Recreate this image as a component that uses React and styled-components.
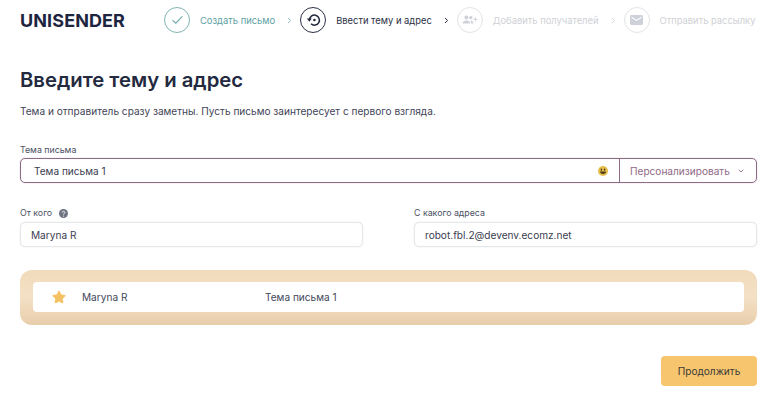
import React from 'react'
import styled, { createGlobalStyle } from 'styled-components'
import { FaStar } from 'react-icons/fa'

const GlobalStyle = createGlobalStyle`
  html, body {
    margin: 0;
    padding: 0;
    background: #fff;
    font-family: Inter, "Liberation Sans", sans-serif;
    color: #2a3044;
  }
`

const Page = styled.div`
  width: 768px;
  height: 401px;
  overflow: hidden;
  padding: 7px 11px 0 20px;
  box-sizing: border-box;
`

const Header = styled.header`
  display: flex;
  align-items: center;
  height: 26px;
`

const Logo = styled.div`
  width: 144px;
  flex: none;
  font-size: 18px;
  font-weight: 700;
  letter-spacing: 0.1px;
  color: #1e2540;
`

const Step = styled.div`
  display: flex;
  align-items: center;
  gap: 10px;
  flex: none;
`

const Circle = styled.div`
  width: 26px;
  height: 26px;
  box-sizing: border-box;
  border-radius: 50%;
  border: 1px solid ${({ $color }) => $color};
  display: flex;
  align-items: center;
  justify-content: center;
  background: #fff;
`

const StepText = styled.span`
  font-size: 9.4px;
  white-space: nowrap;
  color: ${({ $color }) => $color};
`

const Chevron = styled.svg`
  width: 5px;
  height: 7px;
  margin: 0 8px 0 12px;
  flex: none;
`

const Title = styled.h1`
  margin: 32px 0 0;
  font-size: 20.3px;
  line-height: 30px;
  font-weight: 600;
  color: #232a40;
`

const Lead = styled.p`
  margin: 8px 0 0;
  font-size: 10.1px;
  line-height: 16px;
  color: #3f4557;
`

const Label = styled.label`
  display: flex;
  align-items: center;
  gap: 7px;
  font-size: 8.8px;
  line-height: 12px;
  color: #4c5162;
  margin-bottom: ${({ $gap }) => $gap}px;
`

const SubjectBlock = styled.div`
  margin-top: 25px;
`

const SubjectBox = styled.div`
  display: flex;
  height: 25px;
  box-sizing: border-box;
  border: 1px solid #8f6a86;
  border-radius: 5px;
  box-shadow: 0 0 1px rgba(143, 106, 134, 0.7);
`

const SubjectValue = styled.div`
  flex: 1;
  display: flex;
  align-items: center;
  justify-content: space-between;
  padding: 0 11px 0 13px;
  font-size: 10.1px;
  color: #3b4052;
`

const Personalize = styled.div`
  width: 137px;
  box-sizing: border-box;
  border-left: 1px solid #8f6a86;
  display: flex;
  align-items: center;
  gap: 8px;
  padding-left: 10px;
  font-size: 10.1px;
  color: #8f6a86;
`

const SenderRow = styled.div`
  display: grid;
  grid-template-columns: 343px 343px;
  justify-content: space-between;
  margin-top: 24px;
`

const Field = styled.div`
  display: flex;
  flex-direction: column;
`

const TextBox = styled.div`
  height: 25px;
  box-sizing: border-box;
  border: 1px solid #e6e7ea;
  border-radius: 5px;
  box-shadow: 0 0 1px rgba(180, 183, 190, 0.7);
  display: flex;
  align-items: center;
  padding-left: 10px;
  font-size: 10.1px;
  color: #3b4052;
`

const Preview = styled.div`
  margin-top: 23px;
  padding: 12px 13px 13px;
  border-radius: 12px;
  background: linear-gradient(180deg, #f1dbbb 0%, #f4e0c4 50%, #e8cdab 100%);
`

const PreviewRow = styled.div`
  height: 30px;
  background: #fff;
  border-radius: 4px;
  display: flex;
  align-items: center;
  font-size: 10.1px;
  color: #43485a;
`

const StarSlot = styled.div`
  width: 49px;
  display: flex;
  justify-content: flex-end;
  padding-right: 16px;
  box-sizing: border-box;
  color: #f5c263;
  font-size: 14px;
`

const SenderName = styled.span`
  width: 183px;
`

const Footer = styled.div`
  display: flex;
  justify-content: flex-end;
  margin-top: 31px;
`

const Continue = styled.button`
  width: 96px;
  height: 30px;
  border: 0;
  border-radius: 4px;
  background: #f6c56d;
  font-family: inherit;
  font-size: 10.1px;
  color: #3b3a3a;
  padding: 0;
`

function ChevronIcon({ color }) {
  return (
    <Chevron viewBox="0 0 5 7">
      <path d="M1 1l2.6 2.5L1 6" fill="none" stroke={color} strokeWidth="1" />
    </Chevron>
  )
}

function HelpIcon() {
  return (
    <svg width="9" height="9" viewBox="0 0 9 9">
      <circle cx="4.5" cy="4.5" r="4.5" fill="#6f7482" />
      <path d="M3.2 3.5c0-1.6 2.7-1.6 2.7 0 0 1-1.4 1-1.4 2" fill="none" stroke="#fff" strokeWidth="0.9" />
      <circle cx="4.5" cy="7" r="0.55" fill="#fff" />
    </svg>
  )
}

function Smiley() {
  return (
    <svg width="10" height="10" viewBox="0 0 10 10">
      <circle cx="5" cy="5" r="5" fill="#e4bd4a" />
      <ellipse cx="3.4" cy="3.6" rx="0.7" ry="1.2" fill="#4b3b1a" />
      <ellipse cx="6.6" cy="3.6" rx="0.7" ry="1.2" fill="#4b3b1a" />
      <path d="M2 5.6h6c0 3.2-6 3.2-6 0z" fill="#4b3b1a" />
    </svg>
  )
}

export default function App() {
  return (
    <Page>
      <GlobalStyle />
      <Header>
        <Logo>UNISENDER</Logo>
        <Step>
          <Circle $color="#7fb3b3">
            <svg width="13" height="10" viewBox="0 0 13 10">
              <path d="M1.5 5.2l3.3 3 6.5-6.8" fill="none" stroke="#6fa7a8" strokeWidth="1.1" />
            </svg>
          </Circle>
          <StepText $color="#5e9fa3">Создать письмо</StepText>
        </Step>
        <ChevronIcon color="#8db9bb" />
        <Step>
          <Circle $color="#2a3044">
            <svg width="15" height="14" viewBox="0 0 15 14">
              <path d="M3.4 7a5 5 0 1 1 1.6 3.8" fill="none" stroke="#23293d" strokeWidth="1.5" />
              <path d="M0.8 5.6h5L3.4 8.8z" fill="#23293d" />
              <circle cx="8.4" cy="7" r="1.3" fill="#23293d" />
            </svg>
          </Circle>
          <StepText $color="#2a3044">Ввести тему и адрес</StepText>
        </Step>
        <ChevronIcon color="#2a3044" />
        <Step>
          <Circle $color="#e2e3e7">
            <svg width="16" height="10" viewBox="0 0 16 10">
              <circle cx="4.4" cy="2.6" r="2" fill="#cfd1d8" />
              <circle cx="8.8" cy="2.6" r="1.7" fill="#cfd1d8" />
              <path d="M0.6 8.6c0-4 7.6-4 7.6 0zM9 8.6c0-1.4-.3-2.2-1-3 2-.6 3.4.8 3.4 3z" fill="#cfd1d8" />
              <path d="M13.4 2.4v4M11.4 4.4h4" stroke="#cfd1d8" strokeWidth="1" />
            </svg>
          </Circle>
          <StepText $color="#cfd1d6">Добавить получателей</StepText>
        </Step>
        <ChevronIcon color="#d8d9de" />
        <Step>
          <Circle $color="#e2e3e7">
            <svg width="13" height="10" viewBox="0 0 13 10">
              <rect width="13" height="10" rx="1.4" fill="#cfd1d8" />
              <path d="M1.5 2.2l5 3.2 5-3.2" fill="none" stroke="#fff" strokeWidth="1.1" />
            </svg>
          </Circle>
          <StepText $color="#cfd1d6">Отправить рассылку</StepText>
        </Step>
      </Header>

      <Title>Введите тему и адрес</Title>
      <Lead>Тема и отправитель сразу заметны. Пусть письмо заинтересует с первого взгляда.</Lead>

      <SubjectBlock>
        <Label $gap={2}>Тема письма</Label>
        <SubjectBox>
          <SubjectValue>
            Тема письма 1
            <Smiley />
          </SubjectValue>
          <Personalize>
            Персонализировать
            <svg width="6" height="4" viewBox="0 0 6 4">
              <path d="M.7.7L3 3l2.3-2.3" fill="none" stroke="#8f6a86" strokeWidth="0.9" />
            </svg>
          </Personalize>
        </SubjectBox>
      </SubjectBlock>

      <SenderRow>
        <Field>
          <Label $gap={3}>
            От кого
            <HelpIcon />
          </Label>
          <TextBox>Maryna R</TextBox>
        </Field>
        <Field>
          <Label $gap={3}>С какого адреса</Label>
          <TextBox>robot.fbl.2@devenv.ecomz.net</TextBox>
        </Field>
      </SenderRow>

      <Preview>
        <PreviewRow>
          <StarSlot>
            <FaStar />
          </StarSlot>
          <SenderName>Maryna R</SenderName>
          <span>Тема письма 1</span>
        </PreviewRow>
      </Preview>

      <Footer>
        <Continue>Продолжить</Continue>
      </Footer>
    </Page>
  )
}
